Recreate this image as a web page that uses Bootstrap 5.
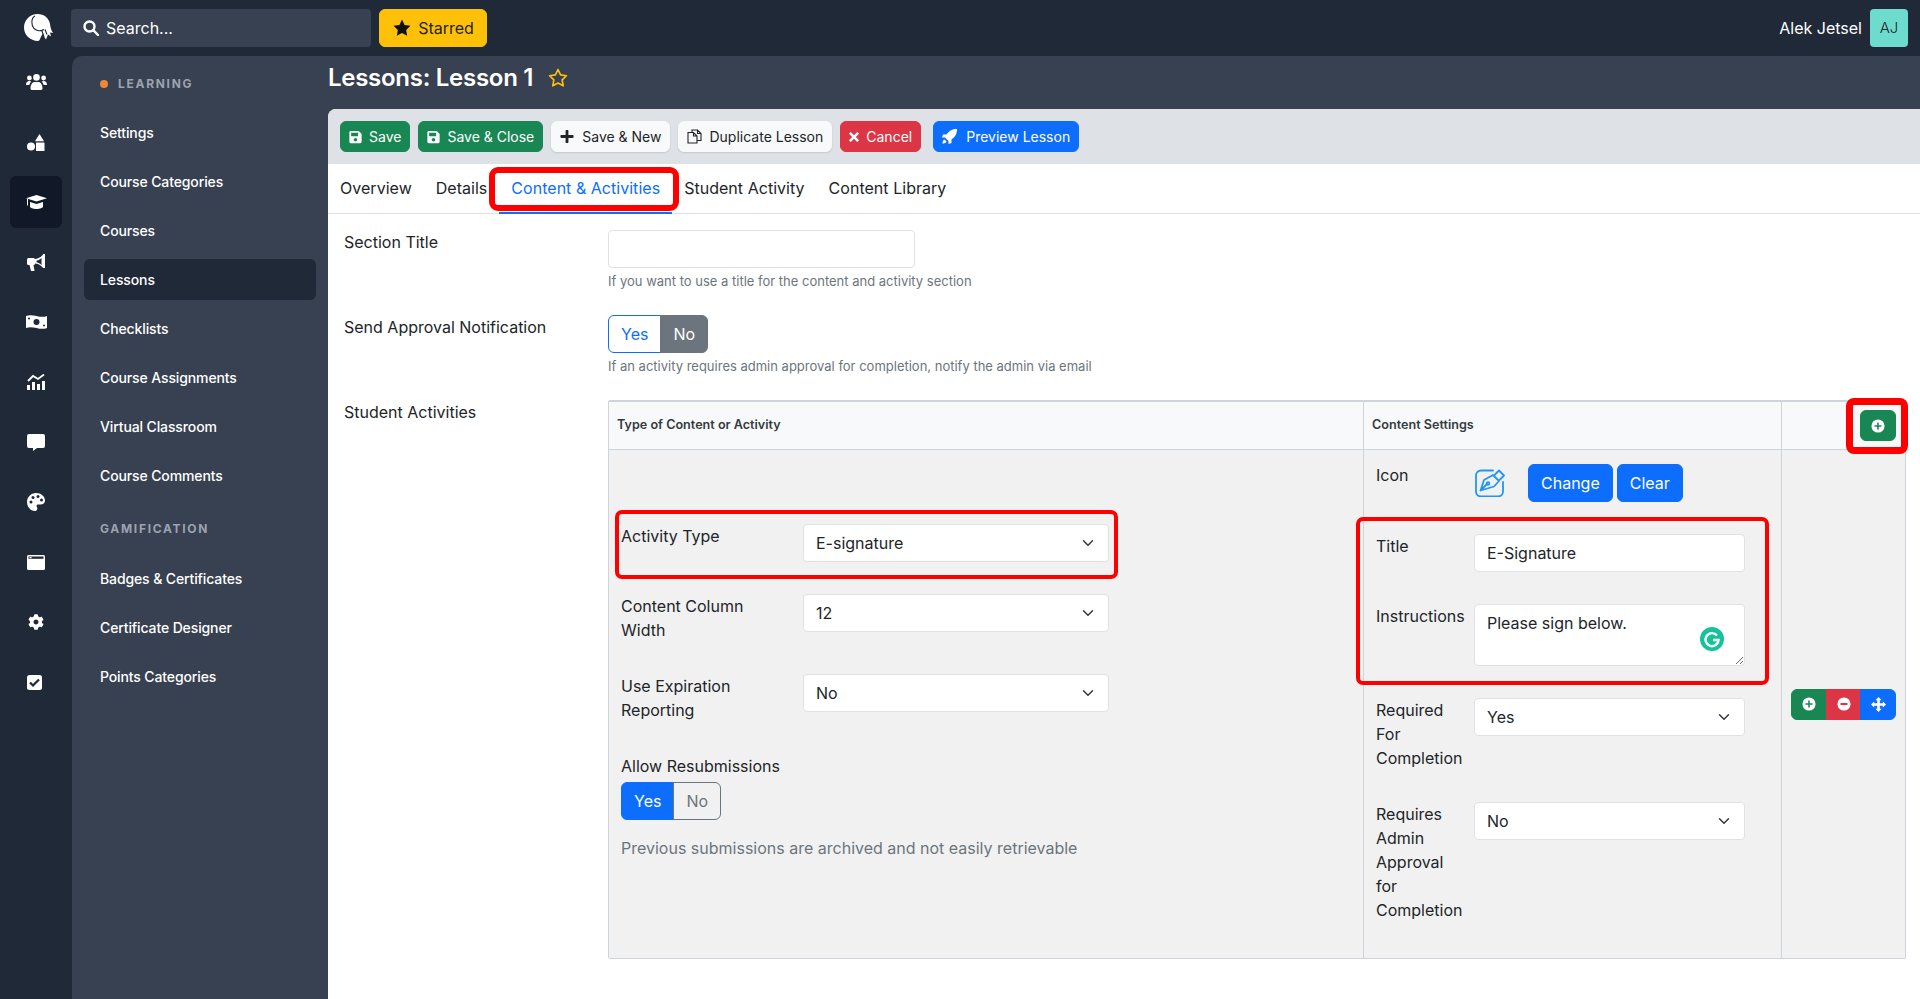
<!DOCTYPE html>
<html lang="en">
<head>
<meta charset="utf-8">
<title>Lessons: Lesson 1</title>
<link href="https://cdn.jsdelivr.net/npm/bootstrap@5.3.0/dist/css/bootstrap.min.css" rel="stylesheet">
<style>
html,body{height:999px;overflow:hidden}
body{font-family:Inter,"Liberation Sans",sans-serif;font-size:16px;color:#212529;background:#1f2937}
.top-strip{height:56px;background:#1f2937;padding:9px 12px 9px 71px;gap:8px}
.search-box{width:300px;height:38px;background:#374151;border-radius:4px;color:#fff;padding-left:12px;gap:7px}
.starred-btn{width:108px;height:38px;font-size:16px;gap:6px;padding:0;--bs-btn-color:#212529}
.logo-mark{position:absolute;left:24px;top:13px}
.user-name{color:#fff;margin-right:8px}
.avatar-box{width:38px;height:38px;background:#6ddccf;color:#212529;border-radius:4px;font-weight:300;font-size:15px}
.rail{width:72px;flex:none;padding-left:10px}
.rail-item{width:52px;height:52px;margin-bottom:8px;border-radius:6px;color:#fff}
.rail-item.on{background:#111827}
.shell{background:#374151;border-top-left-radius:10px;min-width:0}
.side{width:256px;flex:none;padding:0 12px}
.side-head{font-size:12px;font-weight:700;letter-spacing:1.7px;color:#9ca3af;height:18px;padding-left:16px}
.head-one{margin-top:19px;margin-bottom:19px}
.head-two{margin-top:24px;margin-bottom:20px}
.side-link{display:block;height:41px;line-height:41px;margin-bottom:8px;padding-left:16px;font-size:14px;font-weight:500;letter-spacing:-.12px;color:#fff;text-decoration:none;border-radius:6px}
.side-link.on{background:#1f2937}
.dot-mark{width:8px;height:8px;border-radius:50%;background:#ed8936;margin-right:10px}
.page-title{height:53px;color:#fff;font-size:24px;font-weight:600;line-height:44px;letter-spacing:-.28px}
.title-star{margin:12px 0 0 15px}
.panel{background:#fff;border-top-left-radius:8px;min-height:0}
.tool-strip{height:55px;background:#dee2e6;border-top-left-radius:8px;padding:12px;gap:8px}
.tool-strip .btn{font-size:14px;height:31px;padding:0 8px;display:flex;align-items:center;gap:7px;white-space:nowrap}
.tool-strip .btn-light{box-shadow:0 1px 2px rgba(0,0,0,.12);color:#212529}
.wide-gap{gap:8px!important}
.tab-strip{height:50px;border-bottom:1px solid #dee2e6}
.tab-link{display:block;padding:12px;height:50px;color:#212529;text-decoration:none;line-height:24px;position:relative;letter-spacing:.03px}
.tab-link.on{color:#0d6efd;border-bottom:2px solid #0d6efd}
.form-zone{padding:16px 14px 0 16px}
.form-line{display:flex}
.line-label{width:264px;flex:none}
.help-line{font-size:13px;line-height:19px;color:#6c757d;margin-top:4px;margin-bottom:24px}
.field-sm{width:307px}
.form-control,.form-select{height:38px;border-radius:4px}
textarea.form-control{height:62px}
.grid-box{width:1298px;border:1px solid #ced4da;border-top-width:2px;border-radius:2px}
.grid-head{height:48px;background:#f8f9fa;border-bottom:1px solid #ced4da;font-size:12.6px;font-weight:600;color:#343a40}
.grid-body{height:508px;background:#f1f1f1}
.col-type{width:754px;flex:none}
.col-set{width:418px;flex:none;border-left:1px solid #ced4da}
.col-act{flex:1;border-left:1px solid #ced4da;padding-right:9px}
.grid-head .col-type{padding-left:8px}
.grid-head .col-set{padding-left:8px}
.type-pad{padding:74px 7px 0 12px}
.set-pad{padding:14px 0 0 12px}
.pair{display:flex;margin-bottom:32px}
.pair-label-a{width:182px;flex:none;padding-right:24px}
.pair-label-b{width:92px;margin-right:6px;flex:none}
.label-up{margin-top:-1px}
.pair-ctl-a{width:306px}
.pair-ctl-b{width:271px}
.yn-group .btn{height:38px;padding:0 12px;display:flex;align-items:center}
.yn-off{background:#fff;color:#0d6efd;border-color:#0d6efd}
.yn-gray{background:#6c757d;color:#fff;border-color:#6c757d}
.yn-on{background:#0d6efd;color:#fff;border-color:#0d6efd}
.yn-ghost{background:transparent;color:#6c757d;border-color:#6c757d}
.note-line{color:#6c757d;margin-top:16px}
.icon-slot{width:54px;height:38px;flex:none}
.mini-btn{width:35px;height:31px;padding:0;display:flex;align-items:center;justify-content:center}
.tri-btn{width:35.67px}
.add-top{width:36px;height:31px}
.add-top .mini-btn{width:36px}
.ann{position:absolute;border:4px solid #f00;border-radius:7px;pointer-events:none}
.ann-tab{left:-10px;right:-7px;top:3px;bottom:1px;border-width:6px;border-radius:9px}
.ann-act{left:-6px;top:-14px;width:503px;height:69px}
.ann-set{left:-20px;top:-17px;width:413px;height:168px}
.ann-add{left:-14px;top:-12px;right:-12px;bottom:-13px;border-width:7px;border-radius:8px}
.gram-badge{position:absolute;right:21px;bottom:15px}
.action-btn{height:38px}
</style>
</head>
<body>
<svg width="0" height="0" class="position-absolute">
<symbol id="i-save" viewBox="0 0 448 512"><path fill="currentColor" d="M433.941 129.941l-83.882-83.882A48 48 0 0 0 316.118 32H48C21.49 32 0 53.49 0 80v352c0 26.51 21.49 48 48 48h352c26.51 0 48-21.49 48-48V163.882a48 48 0 0 0-14.059-33.941zM224 416c-35.346 0-64-28.654-64-64 0-35.346 28.654-64 64-64s64 28.654 64 64c0 35.346-28.654 64-64 64zm96-304.52V212c0 6.627-5.373 12-12 12H76c-6.627 0-12-5.373-12-12V108c0-6.627 5.373-12 12-12h228.52c3.183 0 6.235 1.264 8.485 3.515l3.48 3.48A11.996 11.996 0 0 1 320 111.48z"/></symbol>
<symbol id="i-plus" viewBox="0 0 448 512"><path fill="currentColor" d="M416 208H272V64c0-17.67-14.33-32-32-32h-32c-17.67 0-32 14.33-32 32v144H32c-17.67 0-32 14.33-32 32v32c0 17.67 14.33 32 32 32h144v144c0 17.67 14.33 32 32 32h32c17.67 0 32-14.33 32-32V304h144c17.67 0 32-14.33 32-32v-32c0-17.67-14.33-32-32-32z"/></symbol>
<symbol id="i-times" viewBox="0 0 352 512"><path fill="currentColor" d="M242.72 256l100.07-100.07c12.28-12.28 12.28-32.19 0-44.48l-22.24-22.24c-12.28-12.28-32.19-12.28-44.48 0L176 189.28 75.93 89.21c-12.28-12.28-32.19-12.28-44.48 0L9.21 111.45c-12.28 12.28-12.28 32.19 0 44.48L109.28 256 9.21 356.07c-12.28 12.28-12.28 32.19 0 44.48l22.24 22.24c12.28 12.28 32.2 12.28 44.48 0L176 322.72l100.07 100.07c12.28 12.28 32.2 12.28 44.48 0l22.24-22.24c12.28-12.28 12.28-32.19 0-44.48L242.72 256z"/></symbol>
<symbol id="i-cog" viewBox="0 0 512 512"><path fill="currentColor" d="M487.4 315.7l-42.6-24.6c4.3-23.2 4.3-47 0-70.2l42.6-24.6c4.9-2.8 7.1-8.6 5.5-14-11.1-35.6-30-67.8-54.7-94.6-3.8-4.1-10-5.1-14.8-2.3L380.8 110c-17.9-15.4-38.5-27.3-60.8-35.1V25.8c0-5.6-3.9-10.5-9.4-11.7-36.7-8.2-74.3-7.8-109.2 0-5.5 1.2-9.4 6.1-9.4 11.7V75c-22.2 7.9-42.8 19.8-60.8 35.1L88.7 85.5c-4.9-2.8-11-1.9-14.8 2.3-24.7 26.7-43.6 58.9-54.7 94.6-1.7 5.4.6 11.2 5.5 14L67.3 221c-4.3 23.2-4.3 47 0 70.2l-42.6 24.6c-4.9 2.8-7.1 8.6-5.5 14 11.1 35.6 30 67.8 54.7 94.6 3.8 4.1 10 5.1 14.8 2.3l42.6-24.6c17.9 15.4 38.5 27.3 60.8 35.1v49.2c0 5.6 3.9 10.5 9.4 11.7 36.7 8.2 74.3 7.8 109.2 0 5.5-1.2 9.4-6.1 9.4-11.7v-49.2c22.2-7.9 42.8-19.8 60.8-35.1l42.6 24.6c4.9 2.8 11 1.9 14.8-2.3 24.7-26.7 43.6-58.9 54.7-94.6 1.5-5.5-.7-11.3-5.6-14.1zM256 336c-44.1 0-80-35.9-80-80s35.9-80 80-80 80 35.9 80 80-35.9 80-80 80z"/></symbol>
<symbol id="i-star" viewBox="0 0 24 24"><path d="M12 1.800l3.100 6.500 7 1-5.100 5 1.200 7.100-6.200-3.400-6.200 3.400 1.200-7.100-5.100-5 7-1z"/></symbol>
<symbol id="i-pc" viewBox="0 0 16 16"><circle cx="8" cy="8" r="7.500" fill="#fff"/><path d="M8 4v8M4 8h8" stroke="#198754" stroke-width="1.800"/></symbol>
</svg>

<div class="top-strip d-flex align-items-center position-relative">
  <svg class="logo-mark" width="30" height="29" viewBox="0 0 30 29"><path fill="#fff" d="M13.500 1C20 1 25 5 26 11c.4 3 1 6 3 9l-3-.5 1 4-3-2-2 5-2-3-1-3-2 3c-1 3-2 4.500-3 4.500C6 28 0 22 0 14.600 0 7 6 1 13.500 1z"/><path fill="none" stroke="#1f2937" stroke-width="1.100" d="M11 3C7 5 7 12 10 15.500c2.500 2.500 7 3 10 1M21 16.500l2 5M18 18l2 6"/></svg>
  <div class="search-box d-flex align-items-center">
    <svg width="16" height="16" viewBox="0 0 16 16" fill="none" stroke="#fff" stroke-width="2.400"><circle cx="6.500" cy="6.500" r="5"/><path d="M10.200 10.200L15 15" stroke-linecap="round"/></svg>
    <span>Search...</span>
  </div>
  <button type="button" class="btn btn-warning starred-btn d-flex align-items-center justify-content-center">
    <svg width="20" height="20" fill="#111"><use href="#i-star"/></svg>Starred
  </button>
  <div class="ms-auto d-flex align-items-center">
    <span class="user-name">Alek Jetsel</span>
    <span class="avatar-box d-flex align-items-center justify-content-center">AJ</span>
  </div>
</div>

<div class="d-flex" style="height:943px">
  <nav class="rail">
    <div class="rail-item d-flex align-items-center justify-content-center">
      <svg width="21" height="16" viewBox="0 0 21 16" fill="#fff"><circle cx="3.400" cy="4" r="2.400"/><circle cx="17.600" cy="4" r="2.400"/><circle cx="10.500" cy="3.400" r="3.300"/><path d="M0 11c0-3 1.500-4 3.300-4 1 0 1.600.3 2 .7C4 8.800 3.500 10 3.400 11zM21 11c0-3-1.500-4-3.300-4-1 0-1.600.3-2 .7 1.300 1.100 1.800 2.300 1.900 3.300zM4.500 14.500c0-4 2-6.500 4-6.500h4c2 0 4 2.500 4 6.500 0 1-1 1.500-2 1.500h-8c-1 0-2-.5-2-1.500z"/></svg>
    </div>
    <div class="rail-item d-flex align-items-center justify-content-center">
      <svg width="18" height="17" viewBox="0 0 18 17" fill="#fff"><path d="M12.500 0l4.500 7.300h-9z"/><circle cx="4" cy="12.500" r="4"/><rect x="9" y="8.500" width="8.500" height="8.500" rx=".6"/></svg>
    </div>
    <div class="rail-item on d-flex align-items-center justify-content-center">
      <svg width="21" height="14" viewBox="0 0 21 14" fill="#fff"><path d="M10.500 0L21 3.300 10.500 6.600 0 3.300z"/><path d="M4 7v4.500c0 1.300 3 2.500 6.500 2.500s6.500-1.200 6.500-2.500V7l-6.500 2z"/><path d="M1.500 4v6.500" stroke="#fff"/></svg>
    </div>
    <div class="rail-item d-flex align-items-center justify-content-center">
      <svg width="19" height="17" viewBox="0 0 19 17" fill="#fff"><path d="M16 0h2v14h-2l-.5-.8C13 10.500 10 9.500 8 9.500H6V5h2c2 0 5-1 7.500-3.700z"/><rect x="0" y="4" width="8" height="7" rx="1.500"/><path d="M2.500 11h4l1 6h-3.500z"/><path d="M14.500 4C12.500 5.800 10.500 6.500 9.500 6.700v1.600c1 .2 3 1 5 2.700z" fill="#1f2937"/></svg>
    </div>
    <div class="rail-item d-flex align-items-center justify-content-center">
      <svg width="21" height="14" viewBox="0 0 21 14"><path fill="#fff" d="M0 1c7-3 14 3 21 0v12c-7 3-14-3-21 0z"/><circle cx="10.500" cy="7" r="3" fill="#1f2937"/><circle cx="3" cy="3.500" r="1" fill="#1f2937"/><circle cx="18" cy="10.500" r="1" fill="#1f2937"/></svg>
    </div>
    <div class="rail-item d-flex align-items-center justify-content-center">
      <svg width="19" height="16" viewBox="0 0 19 16" fill="#fff"><rect x="0" y="11" width="3" height="5"/><rect x="5" y="8" width="3" height="8"/><rect x="10" y="10" width="3" height="6"/><rect x="15" y="7" width="3" height="9"/><path d="M1 7l5-5 5 3 6-4.500" fill="none" stroke="#fff" stroke-width="1.800"/></svg>
    </div>
    <div class="rail-item d-flex align-items-center justify-content-center">
      <svg width="18" height="17" viewBox="0 0 18 17" fill="#fff"><path d="M2 0h14a2 2 0 0 1 2 2v10a2 2 0 0 1-2 2h-6l-4 3v-3H2a2 2 0 0 1-2-2V2a2 2 0 0 1 2-2z"/></svg>
    </div>
    <div class="rail-item d-flex align-items-center justify-content-center">
      <svg width="18" height="18" viewBox="0 0 18 18"><path fill="#fff" d="M9 0c5 0 9 3.300 9 7.500 0 2.500-2 4-4.500 4H11c-1.200 0-1.800 1.200-1.200 2.200.6 1 .8 2 .2 3-.3.8-1 1.300-2 1.300C3.500 18 0 14 0 9c0-5 4-9 9-9z"/><circle cx="4" cy="9" r="1.500" fill="#1f2937"/><circle cx="6" cy="4.500" r="1.500" fill="#1f2937"/><circle cx="11" cy="3.500" r="1.500" fill="#1f2937"/><circle cx="14.500" cy="7" r="1.500" fill="#1f2937"/></svg>
    </div>
    <div class="rail-item d-flex align-items-center justify-content-center">
      <svg width="18" height="15" viewBox="0 0 18 15"><rect width="18" height="15" rx="1.500" fill="#fff"/><rect x="1.500" y="1.500" width="15" height="2.300" fill="#1f2937"/><rect x="2.500" y="2" width="2" height="1.300" fill="#fff"/></svg>
    </div>
    <div class="rail-item d-flex align-items-center justify-content-center">
      <svg width="16" height="16"><use href="#i-cog"/></svg>
    </div>
    <div class="rail-item d-flex align-items-center justify-content-center">
      <svg class="me-1" width="15" height="15" viewBox="0 0 15 15"><rect width="15" height="15" rx="2.500" fill="#fff"/><path d="M3 7.500l3 3 6-6" fill="none" stroke="#1f2937" stroke-width="2.200"/></svg>
    </div>
  </nav>

  <div class="shell d-flex flex-grow-1">
    <aside class="side">
      <div class="side-head head-one d-flex align-items-center"><span class="dot-mark"></span>LEARNING</div>
      <a class="side-link" href="#">Settings</a>
      <a class="side-link" href="#">Course Categories</a>
      <a class="side-link" href="#">Courses</a>
      <a class="side-link on" href="#">Lessons</a>
      <a class="side-link" href="#">Checklists</a>
      <a class="side-link" href="#">Course Assignments</a>
      <a class="side-link" href="#">Virtual Classroom</a>
      <a class="side-link" href="#">Course Comments</a>
      <div class="side-head head-two d-flex align-items-center">GAMIFICATION</div>
      <a class="side-link" href="#">Badges &amp; Certificates</a>
      <a class="side-link" href="#">Certificate Designer</a>
      <a class="side-link" href="#">Points Categories</a>
    </aside>

    <main class="d-flex flex-column flex-grow-1" style="min-width:0">
      <div class="page-title d-flex">
        <span>Lessons: Lesson 1</span>
        <svg class="title-star" width="20" height="20" fill="none" stroke="#ffc107" stroke-width="2" stroke-linejoin="round"><use href="#i-star"/></svg>
      </div>
      <div class="panel flex-grow-1">
        <div class="tool-strip d-flex">
          <button type="button" class="btn btn-success"><svg width="13" height="14"><use href="#i-save"/></svg>Save</button>
          <button type="button" class="btn btn-success"><svg width="13" height="14"><use href="#i-save"/></svg>Save &amp; Close</button>
          <button type="button" class="btn btn-light wide-gap"><svg width="14" height="15"><use href="#i-plus"/></svg>Save &amp; New</button>
          <button type="button" class="btn btn-light"><svg width="15" height="15" viewBox="0 0 15 15" fill="none" stroke="#212529" stroke-width="1.100"><path d="M5 3.500V1h5.500L14 4.500v7H10M1 3.500h5.500L10 7v7H1zM10.500 1v3.500H14M6.500 3.500V7H10"/></svg>Duplicate Lesson</button>
          <button type="button" class="btn btn-danger"><svg width="10" height="14"><use href="#i-times"/></svg>Cancel</button>
          <button type="button" class="btn btn-primary ms-1"><svg width="15" height="15" viewBox="0 0 15 15" fill="#fff"><path d="M15 0c0 5-2 8-5.500 10.500L9.500 14l-3 1V12L3 8.500H0l1-3h3.500C7 2 10 0 15 0z"/><path d="M2.500 10.500c-1.500.5-2 2-2 4 2 0 3.500-.5 4-2z"/></svg><span style="margin-left:2px">Preview Lesson</span></button>
        </div>
        <div class="tab-strip d-flex">
          <a class="tab-link" href="#">Overview</a>
          <a class="tab-link" href="#">Details</a>
          <a class="tab-link on" href="#">Content &amp; Activities<span class="ann ann-tab"></span></a>
          <a class="tab-link" href="#">Student Activity</a>
          <a class="tab-link" href="#">Content Library</a>
        </div>
        <div class="form-zone">
          <div class="form-line">
            <div class="line-label">Section Title</div>
            <div>
              <input type="text" class="form-control field-sm">
              <div class="help-line">If you want to use a title for the content and activity section</div>
            </div>
          </div>
          <div class="form-line">
            <div class="line-label">Send Approval Notification</div>
            <div>
              <div class="btn-group yn-group"><button type="button" class="btn yn-off">Yes</button><button type="button" class="btn yn-gray">No</button></div>
              <div class="help-line">If an activity requires admin approval for completion, notify the admin via email</div>
            </div>
          </div>
          <div class="form-line">
            <div class="line-label">Student Activities</div>
            <div class="grid-box">
              <div class="grid-head d-flex">
                <div class="col-type d-flex align-items-center">Type of Content or Activity</div>
                <div class="col-set d-flex align-items-center">Content Settings</div>
                <div class="col-act d-flex align-items-center justify-content-end">
                  <div class="position-relative add-top">
                    <button type="button" class="btn btn-success mini-btn" aria-label="Add"><svg width="14" height="14"><use href="#i-pc"/></svg></button>
                    <span class="ann ann-add"></span>
                  </div>
                </div>
              </div>
              <div class="grid-body d-flex">
                <div class="col-type type-pad">
                  <div class="pair position-relative">
                    <span class="ann ann-act"></span>
                    <div class="pair-label-a">Activity Type</div>
                    <select class="form-select pair-ctl-a"><option>E-signature</option></select>
                  </div>
                  <div class="pair">
                    <div class="pair-label-a">Content Column Width</div>
                    <select class="form-select pair-ctl-a"><option>12</option></select>
                  </div>
                  <div class="pair">
                    <div class="pair-label-a">Use Expiration Reporting</div>
                    <select class="form-select pair-ctl-a"><option>No</option></select>
                  </div>
                  <div class="mb-1">Allow Resubmissions</div>
                  <div class="btn-group yn-group"><button type="button" class="btn yn-on">Yes</button><button type="button" class="btn yn-ghost">No</button></div>
                  <div class="note-line">Previous submissions are archived and not easily retrievable</div>
                </div>
                <div class="col-set set-pad">
                  <div class="pair">
                    <div class="pair-label-b label-up">Icon</div>
                    <div class="icon-slot d-flex align-items-center">
                      <svg width="32" height="28" viewBox="0 0 32 28" fill="none" stroke="#2196f3" stroke-width="1.800" stroke-linejoin="round" stroke-linecap="round"><path d="M19 1.500H7a5 5 0 0 0-5 5v16a5 5 0 0 0 5 5h17a5 5 0 0 0 5-5V13"/><path d="M6.500 21.500L10 11l9-5 6 6-5 5.500zM21 5.500l4-4 5 5-4 4M6.500 21.500L13 15"/><circle cx="14" cy="14.500" r="1.400"/></svg>
                    </div>
                    <button type="button" class="btn btn-primary action-btn me-1">Change</button>
                    <button type="button" class="btn btn-primary action-btn">Clear</button>
                  </div>
                  <div class="position-relative">
                    <span class="ann ann-set"></span>
                    <div class="pair">
                      <div class="pair-label-b">Title</div>
                      <input type="text" class="form-control pair-ctl-b" value="E-Signature">
                    </div>
                    <div class="pair">
                      <div class="pair-label-b">Instructions</div>
                      <div class="position-relative pair-ctl-b">
                        <textarea class="form-control">Please sign below.</textarea>
                        <svg class="gram-badge" width="24" height="24" viewBox="0 0 24 24"><circle cx="12" cy="12" r="12" fill="#15c39a"/><path d="M17 8.500A6.500 6.500 0 1 0 18.500 13H13" fill="none" stroke="#fff" stroke-width="2.400"/></svg>
                      </div>
                    </div>
                  </div>
                  <div class="pair">
                    <div class="pair-label-b">Required For Completion</div>
                    <select class="form-select pair-ctl-b"><option>Yes</option></select>
                  </div>
                  <div class="pair">
                    <div class="pair-label-b">Requires Admin Approval for Completion</div>
                    <select class="form-select pair-ctl-b"><option>No</option></select>
                  </div>
                </div>
                <div class="col-act d-flex align-items-center justify-content-end">
                  <div class="btn-group">
                    <button type="button" class="btn btn-success mini-btn tri-btn" aria-label="Add"><svg width="14" height="14"><use href="#i-pc"/></svg></button>
                    <button type="button" class="btn btn-danger mini-btn tri-btn" aria-label="Remove"><svg width="14" height="14" viewBox="0 0 16 16"><circle cx="8" cy="8" r="7.500" fill="#fff"/><path d="M4 8h8" stroke="#dc3545" stroke-width="2.400"/></svg></button>
                    <button type="button" class="btn btn-primary mini-btn tri-btn" aria-label="Move"><svg width="15" height="15" viewBox="0 0 16 16" fill="#fff"><path d="M8 0l3.200 3.400H9.400v3.200h3.200V4.800L16 8l-3.400 3.200V9.400H9.400v3.200h1.800L8 16l-3.200-3.400h1.800V9.400H3.400v1.800L0 8l3.400-3.200v1.800h3.200V3.400H4.800z"/></svg></button>
                  </div>
                </div>
              </div>
            </div>
          </div>
        </div>
      </div>
    </main>
  </div>
</div>
<script src="https://cdn.jsdelivr.net/npm/bootstrap@5.3.0/dist/js/bootstrap.bundle.min.js"></script>
</body>
</html>
